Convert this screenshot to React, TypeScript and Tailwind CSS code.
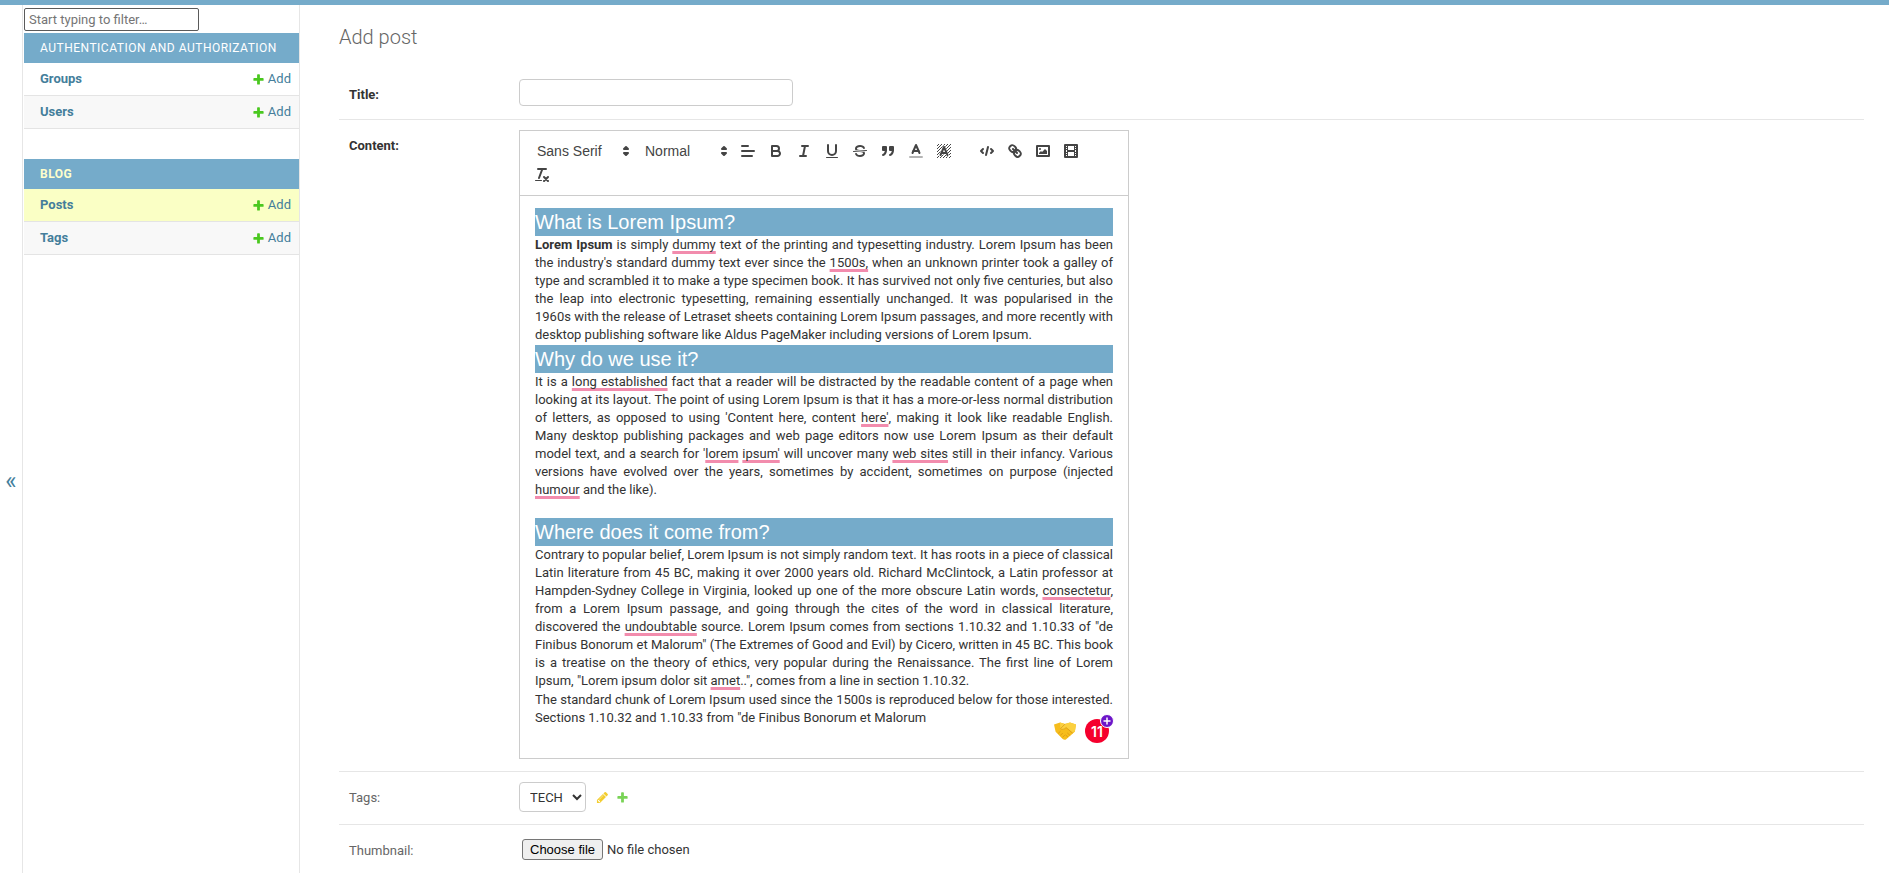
import type { ReactNode } from 'react';

const PLUS =
  'M1600 796v192q0 40-28 68t-68 28h-416v416q0 40-28 68t-68 28h-192q-40 0-68-28t-28-68v-416h-416q-40 0-68-28t-28-68v-192q0-40 28-68t68-28h416v-416q0-40 28-68t68-28h192q40 0 68 28t28 68v416h416q40 0 68 28t28 68z';
const PENCIL =
  'M491 1536l91-91-235-235-91 91v107h128v128h107zm523-928q0-22-22-22-10 0-17 7l-542 542q-7 7-7 17 0 22 22 22 10 0 17-7l542-542q7-7 7-17zm-54-192l416 416-832 832h-416v-416zm683 96q0 53-37 90l-166 166-416-416 166-165q36-38 90-38 53 0 91 38l235 234q37 39 37 91z';

function Glyph({ d, className }: { d: string; className: string }) {
  return (
    <svg viewBox="0 0 1792 1792" fill="currentColor" aria-hidden="true" className={className}>
      <path d={d} />
    </svg>
  );
}

/* ---------- Sidebar ---------- */

type Model = { name: string; tone: string };

function AppGroup({ title, current, models }: { title: string; current?: boolean; models: Model[] }) {
  return (
    <table className="mb-[30px] w-full border-collapse text-[13px] leading-4">
      <caption
        className={`bg-[#75abca] px-4 py-[7px] text-left text-[12px] tracking-[0.5px] uppercase ${
          current ? 'font-bold text-[#ffffcc]' : 'text-white'
        }`}
      >
        <a href="#app">{title}</a>
      </caption>
      <tbody>
        {models.map((m) => (
          <tr key={m.name} className={`border-b border-[#e4e4e4] ${m.tone}`}>
            <th scope="row" className="py-2 pl-4 text-left font-bold text-[#447e9b]">
              <a href="#list">{m.name}</a>
            </th>
            <td className="py-2 pr-2">
              <a href="#add" className="flex items-center justify-end gap-[3px] text-[#447e9b]">
                <Glyph d={PLUS} className="size-[13px] text-[#4ac81f]" />
                Add
              </a>
            </td>
          </tr>
        ))}
      </tbody>
    </table>
  );
}

function Sidebar() {
  return (
    <nav aria-label="Sidebar" className="w-[278px] shrink-0 border-x border-[#e6e6e6] pt-[3px] pl-px">
      <input
        type="search"
        aria-label="Filter navigation items"
        placeholder="Start typing to filter…"
        className="mb-0.5 block h-[23px] w-[175px] rounded-xs border border-[#5a5a5a] px-1 text-[13px] placeholder:text-[#757575]"
      />
      <AppGroup
        title="Authentication and Authorization"
        models={[
          { name: 'Groups', tone: 'bg-white' },
          { name: 'Users', tone: 'bg-[#f8f8f8]' },
        ]}
      />
      <AppGroup
        title="Blog"
        current
        models={[
          { name: 'Posts', tone: 'bg-[#faffc5]' },
          { name: 'Tags', tone: 'bg-[#f8f8f8]' },
        ]}
      />
    </nav>
  );
}

/* ---------- Editor toolbar ---------- */

function ToolIcon({ children }: { children: ReactNode }) {
  return (
    <svg
      viewBox="0 0 18 18"
      className="size-[18px]"
      fill="none"
      stroke="currentColor"
      strokeWidth="2"
      strokeLinecap="round"
      strokeLinejoin="round"
      aria-hidden="true"
    >
      {children}
    </svg>
  );
}

function Tool({ label, last, children }: { label: string; last?: boolean; children: ReactNode }) {
  return (
    <button
      type="button"
      aria-label={label}
      className={`flex h-6 w-7 items-center justify-center ${last ? 'mr-[15px]' : ''}`}
    >
      <ToolIcon>{children}</ToolIcon>
    </button>
  );
}

function Picker({ label, value, width }: { label: string; value: string; width: string }) {
  return (
    <div className={`grid h-6 items-center pr-px text-[14px] font-medium ${width}`}>
      <select aria-label={label} className="col-start-1 row-start-1 h-6 w-full appearance-none pl-[9px]">
        <option>{value}</option>
      </select>
      <span className="pointer-events-none col-start-1 row-start-1 justify-self-end">
        <ToolIcon>
          <polygon fill="currentColor" points="7 11 9 13 11 11 7 11" />
          <polygon fill="currentColor" points="7 7 9 5 11 7 7 7" />
        </ToolIcon>
      </span>
    </div>
  );
}

function HatchedA() {
  return (
    <>
      <g strokeWidth="1" strokeLinecap="butt">
        <path d="M2 4L4 2M2 7L7 2M2 10L10 2M2 13L13 2M2 16L16 2M5 16L16 5M8 16L16 8M11 16L16 11M14 16L16 14" />
      </g>
      <path d="M5.500 13L9 5L12.500 13M6.400 11H11.600" stroke="#fff" strokeWidth="3" />
      <path d="M5.500 13L9 5L12.500 13M6.400 11H11.600" />
    </>
  );
}

function Toolbar() {
  return (
    <div className="flex flex-wrap border-b border-[#ccc] p-2 font-['Liberation_Sans',Arial,sans-serif] text-[#444]">
      <Picker label="Font" value="Sans Serif" width="w-[108px]" />
      <Picker label="Heading" value="Normal" width="w-[98px]" />
      <Tool label="Align">
        <path d="M3 9H15M3 14H13M3 4H9" />
      </Tool>
      <Tool label="Bold">
        <path d="M5,4H9.5A2.5,2.5,0,0,1,12,6.5v0A2.5,2.5,0,0,1,9.5,9H5V4Z" />
        <path d="M5,9h5.5A2.5,2.5,0,0,1,13,11.5v0A2.5,2.5,0,0,1,10.5,14H5V9Z" />
      </Tool>
      <Tool label="Italic">
        <path d="M7 4H13M5 14H11M8 14L10 4" />
      </Tool>
      <Tool label="Underline">
        <path d="M5,3V9a4.012,4.012,0,0,0,4,4H9a4.012,4.012,0,0,0,4-4V3" />
        <rect fill="currentColor" stroke="none" height="1" width="12" x="3" y="15" rx=".5" />
      </Tool>
      <Tool label="Strike">
        <line strokeWidth="1" x1="15.5" x2="2.5" y1="8.5" y2="9.5" />
        <g fill="currentColor" stroke="none">
          <path d="M9.007,8C6.542,7.791,6,7.519,6,6.5,6,5.792,7.283,5,9,5c1.571,0,2.765.679,2.969,1.309a1,1,0,0,0,1.9-.617C13.356,4.106,11.354,3,9,3,6.2,3,4,4.538,4,6.5a3.2,3.2,0,0,0,.5,1.843Z" />
          <path d="M8.984,10C11.457,10.208,12,10.479,12,11.5c0,0.708-1.283,1.5-3,1.5-1.571,0-2.765-.679-2.969-1.309a1,1,0,1,0-1.9.617C4.644,13.894,6.646,15,9,15c2.8,0,5-1.538,5-3.5a3.2,3.2,0,0,0-.5-1.843Z" />
        </g>
      </Tool>
      <Tool label="Blockquote">
        <rect fill="currentColor" height="3" width="3" x="4" y="5" />
        <rect fill="currentColor" height="3" width="3" x="11" y="5" />
        <path fill="currentColor" d="M7,8c0,4.031-3,5-3,5" />
        <path fill="currentColor" d="M14,8c0,4.031-3,5-3,5" />
      </Tool>
      <Tool label="Text colour">
        <line opacity="0.4" x1="3" x2="15" y1="15" y2="15" />
        <polyline points="5.5 11 9 3 12.5 11" />
        <line x1="11.63" x2="6.38" y1="9" y2="9" />
      </Tool>
      <Tool label="Background colour" last>
        <HatchedA />
      </Tool>
      <Tool label="Code block">
        <polyline points="5 7 3 9 5 11" />
        <polyline points="13 7 15 9 13 11" />
        <line x1="10" x2="8" y1="5" y2="13" />
      </Tool>
      <Tool label="Link">
        <line x1="7" x2="11" y1="7" y2="11" />
        <path d="M8.9,4.577a3.476,3.476,0,0,1,.36,4.679A3.476,3.476,0,0,1,4.577,8.9C3.185,7.5,2.035,6.4,4.217,4.217S7.5,3.185,8.9,4.577Z" />
        <path d="M13.423,9.1a3.476,3.476,0,0,0-4.679-.36,3.476,3.476,0,0,0,.36,4.679c1.392,1.392,2.5,2.542,4.679.36S14.815,10.5,13.423,9.1Z" />
      </Tool>
      <Tool label="Image">
        <rect height="10" width="12" x="3" y="4" />
        <circle fill="currentColor" stroke="none" cx="6" cy="7" r="1" />
        <polyline fill="currentColor" stroke="none" points="5 12 5 11 7 9 8 10 11 7 13 9 13 12 5 12" />
      </Tool>
      <Tool label="Video" last>
        <rect height="12" width="12" x="3" y="3" />
        <path
          fill="currentColor"
          stroke="none"
          d="M5 3h1v12h-1zM12 3h1v12h-1zM5 8h8v2h-8zM3 5h3v1h-3zM3 7h3v1h-3zM3 10h3v1h-3zM3 12h3v1h-3zM12 5h3v1h-3zM12 7h3v1h-3zM12 10h3v1h-3zM12 12h3v1h-3z"
        />
      </Tool>
      <Tool label="Clear formatting">
        <path d="M5 3H13M6 12L9.35 3M11 11L15 15M15 11L11 15" />
        <rect fill="currentColor" stroke="none" height="1" width="7" x="2" y="14" rx=".5" />
      </Tool>
    </div>
  );
}

/* ---------- Editor body ---------- */

function Heading({ children }: { children: ReactNode }) {
  return (
    <h2 className="bg-[#75abca] text-left font-['Liberation_Sans',Arial,sans-serif] text-[20px] leading-7 text-white">
      {children}
    </h2>
  );
}

function Hint({ children }: { children: ReactNode }) {
  return (
    <span className="underline decoration-[#f28cad] decoration-[3px] underline-offset-2 [text-decoration-skip-ink:none]">
      {children}
    </span>
  );
}

function WritingAssistant() {
  return (
    <div className="absolute right-[19px] bottom-[15px] flex items-end gap-2">
      <svg viewBox="0 0 24 20" className="mb-0.5 h-5 w-6" aria-label="Suggestions" role="img">
        <path d="M1 3.5L7 1.5l5 1.6 5-1.6 6 2-1.2 7.2-8.6 7.6c-1 .8-2.600.6-3.500-.3L2.600 10.800z" fill="#f6bd1c" />
        <path d="M7 1.500l5 1.600 5-1.600 6 2-1 6.500-2.300 1.800-6.200-5.300-3.500 2.600-2.600-1.300z" fill="#fbd03f" />
        <path
          d="M12 3.100L7.600 7.500c1.300 1.500 3.400 1 5.500-.9l6.400 5.400M5.400 12.300l1.800-1.800M7.500 14.300l2-2M9.700 16.200l1.800-1.800M14.600 12.200l2.300 2.100M12.800 14.100l2 1.900"
          fill="none"
          stroke="#cf8a12"
          strokeWidth=".6"
          strokeLinecap="round"
          strokeLinejoin="round"
        />
      </svg>
      <button
        type="button"
        className="relative flex size-6 items-center justify-center rounded-full bg-[#f5002d] font-[Inter,sans-serif] text-[14px] font-semibold text-white"
      >
        11
        <svg viewBox="0 0 14 14" className="absolute -top-[5px] -right-[5px] size-[14px]" aria-hidden="true">
          <circle cx="7" cy="7" r="6.500" fill="#6d16c9" stroke="#fff" />
          <path d="M7 3.500v7M3.500 7h7" stroke="#fff" strokeWidth="1.500" />
        </svg>
      </button>
    </div>
  );
}

function Editor() {
  return (
    <div className="w-[610px] max-w-full border border-[#ccc]">
      <Toolbar />
      <div className="relative">
        <div
          role="textbox"
          aria-multiline="true"
          aria-label="Content"
          contentEditable
          suppressContentEditableWarning
          spellCheck={false}
          className="min-h-[562px] px-[15px] py-3 text-justify text-[13px] leading-[18px] text-[#333] outline-none"
        >
          <Heading>What is Lorem Ipsum?</Heading>
          <p className="pb-px">
            <strong>Lorem Ipsum</strong> is simply <Hint>dummy</Hint> text of the printing and typesetting industry.
            Lorem Ipsum has been the industry's standard dummy text ever since the <Hint>1500s,</Hint> when an unknown
            printer took a galley of type and scrambled it to make a type specimen book. It has survived not only five
            centuries, but also the leap into electronic typesetting, remaining essentially unchanged. It was
            popularised in the 1960s with the release of Letraset sheets containing Lorem Ipsum passages, and more
            recently with desktop publishing software like Aldus PageMaker including versions of Lorem Ipsum.
          </p>
          <Heading>Why do we use it?</Heading>
          <p className="pb-px">
            It is a <Hint>long established</Hint> fact that a reader will be distracted by the readable content of a
            page when looking at its layout. The point of using Lorem Ipsum is that it has a more-or-less normal
            distribution of letters, as opposed to using 'Content here, content <Hint>here'</Hint>, making it look like
            readable English. Many desktop publishing packages and web page editors now use Lorem Ipsum as their
            default model text, and a search for '<Hint>lorem</Hint> <Hint>ipsum'</Hint> will uncover many{' '}
            <Hint>web sites</Hint> still in their infancy. Various versions have evolved over the years, sometimes by
            accident, sometimes on purpose (injected <Hint>humour</Hint> and the like).
          </p>
          <p>
            <br />
          </p>
          <Heading>Where does it come from?</Heading>
          <p className="pb-px">
            Contrary to popular belief, Lorem Ipsum is not simply random text. It has roots in a piece of classical
            Latin literature from 45 BC, making it over 2000 years old. Richard McClintock, a Latin professor at
            Hampden-Sydney College in Virginia, looked up one of the more obscure Latin words,{' '}
            <Hint>consectetur</Hint>, from a Lorem Ipsum passage, and going through the cites of the word in classical
            literature, discovered the <Hint>undoubtable</Hint> source. Lorem Ipsum comes from sections 1.10.32 and
            1.10.33 of "de Finibus Bonorum et Malorum" (The Extremes of Good and Evil) by Cicero, written in 45 BC.
            This book is a treatise on the theory of ethics, very popular during the Renaissance. The first line of
            Lorem Ipsum, "Lorem ipsum dolor sit <Hint>amet</Hint>..", comes from a line in section 1.10.32.
          </p>
          <p>
            The standard chunk of Lorem Ipsum used since the 1500s is reproduced below for those interested. Sections
            1.10.32 and 1.10.33 from "de Finibus Bonorum et Malorum
          </p>
        </div>
        <WritingAssistant />
      </div>
    </div>
  );
}

/* ---------- Form ---------- */

function Row({ children, last }: { children: ReactNode; last?: boolean }) {
  return <div className={`flex px-[10px] py-[10px] ${last ? '' : 'border-b border-[#e6e6e6]'}`}>{children}</div>;
}

export default function App() {
  return (
    <div className="flex min-h-screen flex-col bg-white font-[Roboto,sans-serif] text-[13px] text-[#333]">
      <header className="h-[5px] bg-[#75abca]" />
      <div className="flex flex-1">
        <button
          type="button"
          aria-label="Toggle navigation"
          className="w-[22px] shrink-0 pt-[84px] text-[24px] text-[#447e9b]"
        >
          «
        </button>
        <Sidebar />
        <main className="min-w-0 flex-1 pt-5 pr-[25px] pl-[39px]">
          <h1 className="mb-[20px] text-[20px] leading-6 font-light text-[#666]">Add post</h1>
          <form>
            <Row>
              <label htmlFor="title" className="w-[170px] shrink-0 pt-2 leading-4 font-bold">
                Title:
              </label>
              <input
                id="title"
                type="text"
                className="mb-[3px] h-[27px] w-[274px] rounded-sm border border-[#ccc] px-1.5"
              />
            </Row>
            <Row>
              <span className="w-[170px] shrink-0 pt-2 leading-4 font-bold">Content:</span>
              <div className="min-w-0 pb-0.5">
                <Editor />
              </div>
            </Row>
            <Row>
              <label htmlFor="tags" className="w-[170px] shrink-0 pt-2 leading-4 text-[#666]">
                Tags:
              </label>
              <div className="mb-0.5 flex items-center">
                <select
                  id="tags"
                  className="h-[30px] w-[67px] rounded-sm border border-[#ccc] bg-white pl-1.5 text-[13px]"
                >
                  <option>TECH</option>
                </select>
                <a href="#change" aria-label="Change selected tag" className="ml-[10px]">
                  <Glyph d={PENCIL} className="size-[13px] text-[#f3cd2e]" />
                </a>
                <a href="#add-tag" aria-label="Add another tag" className="ml-[7px]">
                  <Glyph d={PLUS} className="size-[13px] text-[#79d356]" />
                </a>
              </div>
            </Row>
            <Row last>
              <label htmlFor="thumbnail" className="w-[170px] shrink-0 pt-2 leading-4 text-[#666]">
                Thumbnail:
              </label>
              <div className="flex items-center gap-1 px-[3px] pt-1">
                <input id="thumbnail" type="file" className="sr-only" />
                <label
                  htmlFor="thumbnail"
                  className="flex h-[21px] items-center rounded-[3px] border border-[#767676] bg-[#efefef] px-[7px] font-['Liberation_Sans',Arial,sans-serif] text-[13px] text-black"
                >
                  Choose file
                </label>
                <span>No file chosen</span>
              </div>
            </Row>
          </form>
        </main>
      </div>
    </div>
  );
}
